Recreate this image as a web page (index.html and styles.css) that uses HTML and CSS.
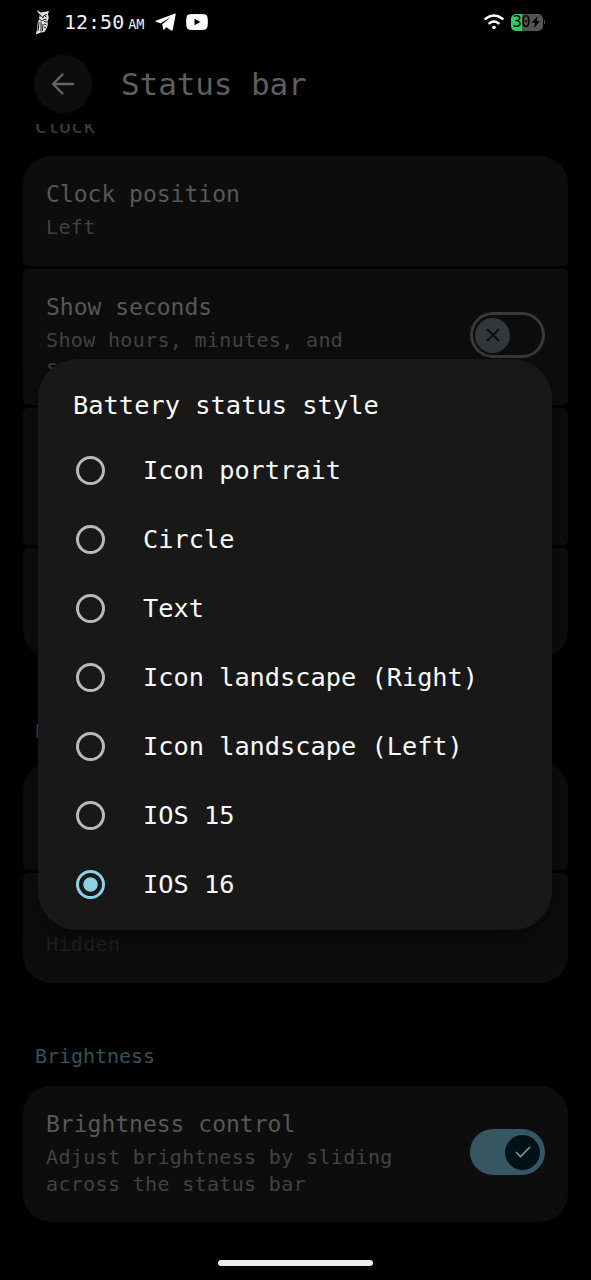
FILE: index.html
```html
<!DOCTYPE html>
<html lang="en">
<head>
<meta charset="utf-8">
<title>Status bar</title>
<link rel="stylesheet" href="styles.css">
</head>
<body>
<div class="screen">
  <div class="system-bar">
    <svg class="owl" width="18" height="28" viewBox="0 0 18 28">
      <path d="M2.500 2l4.500 2.500 3-.5L15 3l-1 3 .8 4-1.300 3 .3 4-1.500 4-2 3-3.500.5-5 2 1.500-6 .2-5 1.500-4 .5-5z" fill="#e4e4e4"/>
      <path d="M4 5.500l3 2 2 2.500 1-2.500 3-1M4.500 10.500l3 2 5-1.500M5 14l-1 9M7 13.500v10M9 16l-.5 7M10 13.500l3 .5M10 16l2.500 1M10 19l2 1M5.500 8h1.500M11 8.500h1.500" stroke="#000" stroke-width=".9" fill="none"/>
    </svg>
    <span class="time">12:50</span><span class="meridiem">AM</span>
    <svg class="telegram" width="21" height="19" viewBox="0 0 21 19"><path d="M19.500.8Q21 .1 20.600 1.900L17.800 16.500Q17.400 18.400 15.800 17.300L11.500 14.200 9.200 16.600Q8.300 17.300 8.100 16L7.300 11.300 15.700 4.100 5.700 10.300 1.300 8.900Q-.3 8.300 1.300 7.600Z" fill="#fff"/></svg>
    <svg class="youtube" width="22" height="16" viewBox="0 0 22 16"><path d="M4 .3Q11-.3 18 .3 21 .4 21.500 3.500 22.200 8 21.500 12.500 21 15.600 18 15.700 11 16.300 4 15.700 1 15.600.5 12.500-.2 8 .5 3.500 1 .4 4 .3Z" fill="#fff"/><path d="M8.500 4.700v6.600L14.500 8z" fill="#000"/></svg>
    <svg class="wifi" width="20" height="16" viewBox="0 0 20 16"><path d="M1.500 4.700Q10-1.700 18.500 4.700M5.500 9.300Q10 5.800 14.500 9.300" fill="none" stroke="#fff" stroke-width="2.400" stroke-linecap="round"/><circle cx="10" cy="13.500" r="1.800" fill="#fff"/></svg>
    <div class="battery"><span class="level">30</span><svg width="10" height="12" viewBox="0 0 9 12"><path d="M6 0L.3 6.700H3.500L2.500 12 8.700 4.900H5.300z" fill="#000"/></svg></div>
    <span class="terminal"></span>
  </div>

  <header class="header">
    <div class="back"><svg width="24" height="24" viewBox="0 0 24 24"><path d="M11.500 2.500L2 12l9.500 9.500M2 12h20" fill="none" stroke="#646464" stroke-width="2.400" stroke-linecap="round" stroke-linejoin="round"/></svg></div>
    <h1 class="page-title">Status bar</h1>
  </header>

  <main class="list">
    <h2 class="label label-clipped">Clock</h2>
    <section class="group">
      <div class="row"><div><div class="name">Clock position</div><div class="summary">Left</div></div></div>
      <div class="row row-tall">
        <div><div class="name">Show seconds</div><div class="summary">Show hours, minutes, and seconds</div></div>
        <div class="switch"><div class="thumb"><svg width="14" height="14" viewBox="0 0 14 14"><path d="M1 1l12 12M13 1L1 13" stroke="#0b0d0f" stroke-width="1.800" fill="none"/></svg></div></div>
      </div>
      <div class="row row-taller"></div>
      <div class="row"></div>
    </section>
    <h2 class="label label-spaced">Battery</h2>
    <section class="group">
      <div class="row row-short"></div>
      <div class="row"><div><div class="name name-shaded">Battery</div><div class="summary summary-shaded">Hidden</div></div></div>
    </section>
    <h2 class="label">Brightness</h2>
    <section class="group">
      <div class="row row-tall">
        <div><div class="name">Brightness control</div><div class="summary">Adjust brightness by sliding across the status bar</div></div>
        <div class="switch switch-on"><div class="thumb"><svg width="16" height="12" viewBox="0 0 16 12"><path d="M1 6l4.500 4.500L15 1" stroke="#7e9399" stroke-width="1.600" fill="none"/></svg></div></div>
      </div>
    </section>
  </main>
  <footer class="nav"><div class="handle"></div></footer>

  <div class="dialog">
    <h3 class="dialog-title">Battery status style</h3>
    <div class="option"><span class="radio"></span>Icon portrait</div>
    <div class="option"><span class="radio"></span>Circle</div>
    <div class="option"><span class="radio"></span>Text</div>
    <div class="option"><span class="radio"></span>Icon landscape (Right)</div>
    <div class="option"><span class="radio"></span>Icon landscape (Left)</div>
    <div class="option"><span class="radio"></span>IOS 15</div>
    <div class="option"><span class="radio radio-on"></span>IOS 16</div>
  </div>
</div>
</body>
</html>
```
FILE: styles.css
```css
* { box-sizing: border-box; }
body { margin: 0; background: #000; font-family: "DejaVu Sans Mono", "Liberation Mono", monospace; }
h1, h2, h3 { margin: 0; font-weight: 400; }
svg { display: block; flex: none; }
.screen { position: relative; width: 591px; height: 1280px; overflow: hidden; display: flex; flex-direction: column; background: #000; }

.system-bar { height: 44px; flex: none; display: flex; align-items: center; padding: 0 46px 0 34px; color: #f2f2f2; }
.time { margin-left: 12px; font-size: 20px; }
.meridiem { margin-left: 4px; font-size: 13.5px; padding-top: 4px; }
.telegram { margin-left: 11px; }
.youtube { margin-left: 10px; }
.wifi { margin-left: auto; }
.battery { margin-left: 7px; width: 32px; height: 17px; border-radius: 5px; background: linear-gradient(90deg, #35c965 35%, #545454 35%); color: #000; display: flex; align-items: center; gap: 1px; padding-left: 2px; }
.level { font-size: 15.5px; letter-spacing: -.6px; line-height: 17px; }
.terminal { width: 1.500px; height: 4px; margin-left: 1px; background: #555; border-radius: 1px; }

.header { height: 80px; flex: none; display: flex; align-items: center; padding-left: 34px; gap: 29px; }
.back { width: 58px; height: 58px; border-radius: 50%; background: #0d0d0d; display: grid; place-items: center; }
.page-title { font-size: 31px; letter-spacing: -.1px; line-height: 40px; color: #5e5e5e; }

.list { overflow: hidden; padding: 0 23px; flex: none; height: 1110px; }
.label { height: 103px; display: flex; align-items: flex-end; padding: 0 0 16px 12px; font-size: 20px; letter-spacing: -.05px; line-height: 28px; color: #355058; }
.label-spaced { height: 104px; padding-bottom: 17px; }
.label-clipped { height: 32px; color: #34434b; }
.group { display: flex; flex-direction: column; gap: 3px; }
.row { height: 110px; display: flex; align-items: flex-start; justify-content: space-between; padding: 23px 23px 0; background: #0d0d0d; border-radius: 5px; }
.row:first-child { border-top-left-radius: 28px; border-top-right-radius: 28px; }
.row:last-child { border-bottom-left-radius: 28px; border-bottom-right-radius: 28px; }
.row-tall { height: 136px; }
.row-taller { height: 137px; }
.row-short { height: 108px; }
.name { font-size: 23px; line-height: 30px; letter-spacing: 0; color: #575757; }
.summary { margin-top: 5px; width: 380px; font-size: 20px; letter-spacing: .34px; line-height: 27px; color: #414242; }
.name-shaded { color: #1c1c1c; }
.summary-shaded { color: #1f1f1f; }
.switch { width: 75px; height: 46px; margin-top: 20px; border: 3px solid #393939; border-radius: 23px; display: flex; align-items: center; padding: 0 2px; }
.thumb { width: 35px; height: 35px; border-radius: 50%; background: #32373c; display: grid; place-items: center; }
.switch-on { border-color: #365662; background: #365662; justify-content: flex-end; }
.switch-on .thumb { background: #001216; }

.nav { flex: 1; display: flex; justify-content: center; padding-top: 26px; }
.handle { width: 155px; height: 6px; border-radius: 3px; background: #ececec; }

.dialog { position: absolute; left: 38px; top: 359px; width: 514px; height: 571px; border-radius: 39px; background: #181818; color: #fafafa; box-shadow: 0 8px 22px rgba(0, 0, 0, .4); }
.dialog-title { height: 77px; padding: 30px 0 0 35px; font-size: 25.4px; line-height: 33px; }
.option { height: 69px; display: flex; align-items: center; gap: 38px; padding-left: 38px; font-size: 25.3px; line-height: 33px; }
.radio { width: 29px; height: 29px; border: 3px solid #b9b9b9; border-radius: 50%; }
.radio-on { border-color: #8bd2e5; background: radial-gradient(circle, #8bd2e5 6.800px, transparent 7.500px); }
```
